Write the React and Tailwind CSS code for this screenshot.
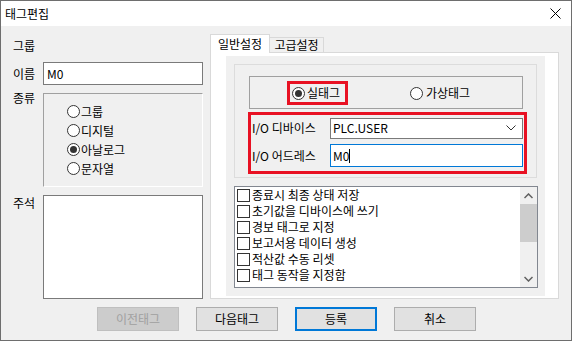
import React from "react";

const font = { fontFamily: '"Noto Sans CJK KR", "Noto Sans", sans-serif' };

function Radio({ checked }) {
  return (
    <span className="relative w-[13px] h-[13px] shrink-0 rounded-full border border-[#333333] bg-white flex items-center justify-center">
      {checked && <span className="w-[7px] h-[7px] rounded-full bg-[#333333]" />}
    </span>
  );
}

function CheckRow({ label }) {
  return (
    <div className="h-[16px] flex items-center pl-[2px]">
      <span className="w-[13px] h-[13px] shrink-0 border border-[#333333] bg-white" />
      <span className="ml-[2px] leading-[16px] text-black">{label}</span>
    </div>
  );
}

function Btn({ children, variant }) {
  const cls =
    variant === "disabled"
      ? "bg-[#cccccc] border border-[#bfbfbf] text-[#a0a0a0]"
      : variant === "default"
      ? "bg-[#e1e1e1] border-2 border-[#0078d7] text-black"
      : "bg-[#e1e1e1] border border-[#adadad] text-black";
  return (
    <div className={`w-[82px] h-[24px] flex items-center justify-center ${cls}`}>
      {children}
    </div>
  );
}

export default function App() {
  return (
    <div
      style={font}
      className="w-[572px] h-[341px] border border-[#6e6e6e] bg-[#f0f0f0] flex flex-col text-[12px] text-black overflow-hidden"
    >
      {/* Title bar */}
      <div className="h-[25px] bg-white flex items-center justify-between shrink-0">
        <span className="ml-[4px] text-[12px] leading-[16px]">태그편집</span>
        <svg width="11" height="11" viewBox="0 0 11 11" className="mr-[10px]">
          <path d="M0.5 0.5 L10.5 10.5 M10.5 0.5 L0.5 10.5" stroke="#000" strokeWidth="1" />
        </svg>
      </div>

      {/* Body */}
      <div className="flex-1 flex flex-col">
        <div className="flex">
          {/* Left column */}
          <div className="ml-[12px] w-[190px] flex flex-col">
            <div className="mt-[12px] h-[16px] leading-[16px]">그룹</div>
            <div className="mt-[8px] flex items-center h-[23px]">
              <span className="w-[30px] leading-[16px]">이름</span>
              <div className="w-[160px] h-[23px] border border-[#7a7a7a] bg-white flex items-center pl-[3px]">
                M0
              </div>
            </div>
            <div className="mt-[8px] flex">
              <span className="w-[30px] leading-[16px] mt-[-3px]">종류</span>
              <div className="w-[160px] h-[94px] border-t border-l border-[#a0a0a0] border-b border-r border-b-white border-r-white flex flex-col pl-[23px] pt-[8px]">
                {[
                  ["그룹", false],
                  ["디지털", false],
                  ["아날로그", true],
                  ["문자열", false],
                ].map(([t, c]) => (
                  <div key={t} className="h-[19px] flex items-center">
                    <Radio checked={c} />
                    <span className="ml-[1px] leading-[16px]">{t}</span>
                  </div>
                ))}
              </div>
            </div>
            <div className="mt-[8px] flex">
              <span className="w-[30px] leading-[16px]">주석</span>
              <div className="w-[160px] h-[104px] border border-[#7a7a7a] bg-white" />
            </div>
          </div>

          {/* Right column: tabs */}
          <div className="ml-[7px] w-[349px] flex flex-col pt-[8px]">
            <div className="flex items-end h-[18px]">
              <div className="relative z-10 w-[60px] h-[19px] -mb-px bg-white border border-b-0 border-[#d9d9d9] flex items-start justify-center pt-[1px] leading-[16px]">
                일반설정
              </div>
              <div className="w-[54px] h-[15px] border border-l-0 border-b-0 border-[#d9d9d9] flex items-center justify-center leading-[14px]">
                고급설정
              </div>
            </div>
            <div className="h-[247px] border border-[#d9d9d9] bg-white pl-[15px] pt-[3px] pr-[13px] pb-[2px]">
              <div className="w-[319px] h-[240px] bg-[#f0f0f0] pl-[8px] pt-[8px] flex flex-col">
                {/* group box */}
                <div className="w-[303px] h-[114px] border border-[#dcdcdc] flex flex-col">
                  <div className="ml-[14px] mt-[11px] w-[274px] h-[33px] border border-[#a0a0a0] flex items-start">
                    <div className="ml-[37px] mt-[4px] w-[61px] h-[24px] border-[3px] border-[#e81123] flex items-center">
                      <span className="ml-[2px]">
                        <Radio checked />
                      </span>
                      <span className="ml-[2px] leading-[16px]">실태그</span>
                    </div>
                    <div className="ml-[62px] mt-[7px] h-[18px] flex items-center">
                      <Radio />
                      <span className="ml-[3px] leading-[16px]">가상태그</span>
                    </div>
                  </div>
                  <div className="ml-[13px] mt-[3px] w-[279px] h-[62px] border-[3px] border-[#e81123] flex flex-col pl-[1px] pt-[2px]">
                    <div className="flex items-center h-[22px]">
                      <span className="w-[78px] leading-[16px]">I/O 디바이스</span>
                      <div className="w-[193px] h-[21px] border border-[#7a7a7a] bg-white flex items-center justify-between pl-[2px] pr-[6px]">
                        <span className="leading-[16px]">PLC.USER</span>
                        <svg width="10" height="6" viewBox="0 0 10 6">
                          <path d="M0.5 0.5 L5 5 L9.5 0.5" fill="none" stroke="#333" strokeWidth="1" />
                        </svg>
                      </div>
                    </div>
                    <div className="flex items-center h-[23px] mt-[5px]">
                      <span className="w-[78px] leading-[16px]">I/O 어드레스</span>
                      <div className="w-[193px] h-[23px] border border-[#0078d7] bg-white flex items-center pl-[2px]">
                        <span className="leading-[16px]">M0</span>
                        <span className="w-px h-[14px] bg-black" />
                      </div>
                    </div>
                  </div>
                </div>
                {/* checklist */}
                <div className="mt-[8px] w-[304px] h-[102px] border border-[#828790] bg-white flex">
                  <div className="flex-1 flex flex-col">
                    {[
                      "종료시 최종 상태 저장",
                      "초기값을 디바이스에 쓰기",
                      "경보 태그로 지정",
                      "보고서용 데이터 생성",
                      "적산값 수동 리셋",
                      "태그 동작을 지정함",
                    ].map((t) => (
                      <CheckRow key={t} label={t} />
                    ))}
                  </div>
                  <div className="w-[17px] bg-[#f0f0f0] flex flex-col items-center">
                    <div className="h-[17px] flex items-center justify-center">
                      <svg width="9" height="6" viewBox="0 0 9 6">
                        <path d="M0.5 5 L4.5 1 L8.5 5" fill="none" stroke="#606060" strokeWidth="1.5" />
                      </svg>
                    </div>
                    <div className="w-[17px] h-[38px] bg-[#cdcdcd]" />
                    <div className="flex-1" />
                    <div className="h-[17px] flex items-center justify-center">
                      <svg width="9" height="6" viewBox="0 0 9 6">
                        <path d="M0.5 1 L4.5 5 L8.5 1" fill="none" stroke="#606060" strokeWidth="1.5" />
                      </svg>
                    </div>
                  </div>
                </div>
              </div>
            </div>
          </div>
        </div>

        {/* buttons */}
        <div className="mt-[8px] ml-[96px] flex gap-[17px]">
          <Btn variant="disabled">이전태그</Btn>
          <Btn>다음태그</Btn>
          <Btn variant="default">등록</Btn>
          <Btn>취소</Btn>
        </div>
      </div>
    </div>
  );
}
